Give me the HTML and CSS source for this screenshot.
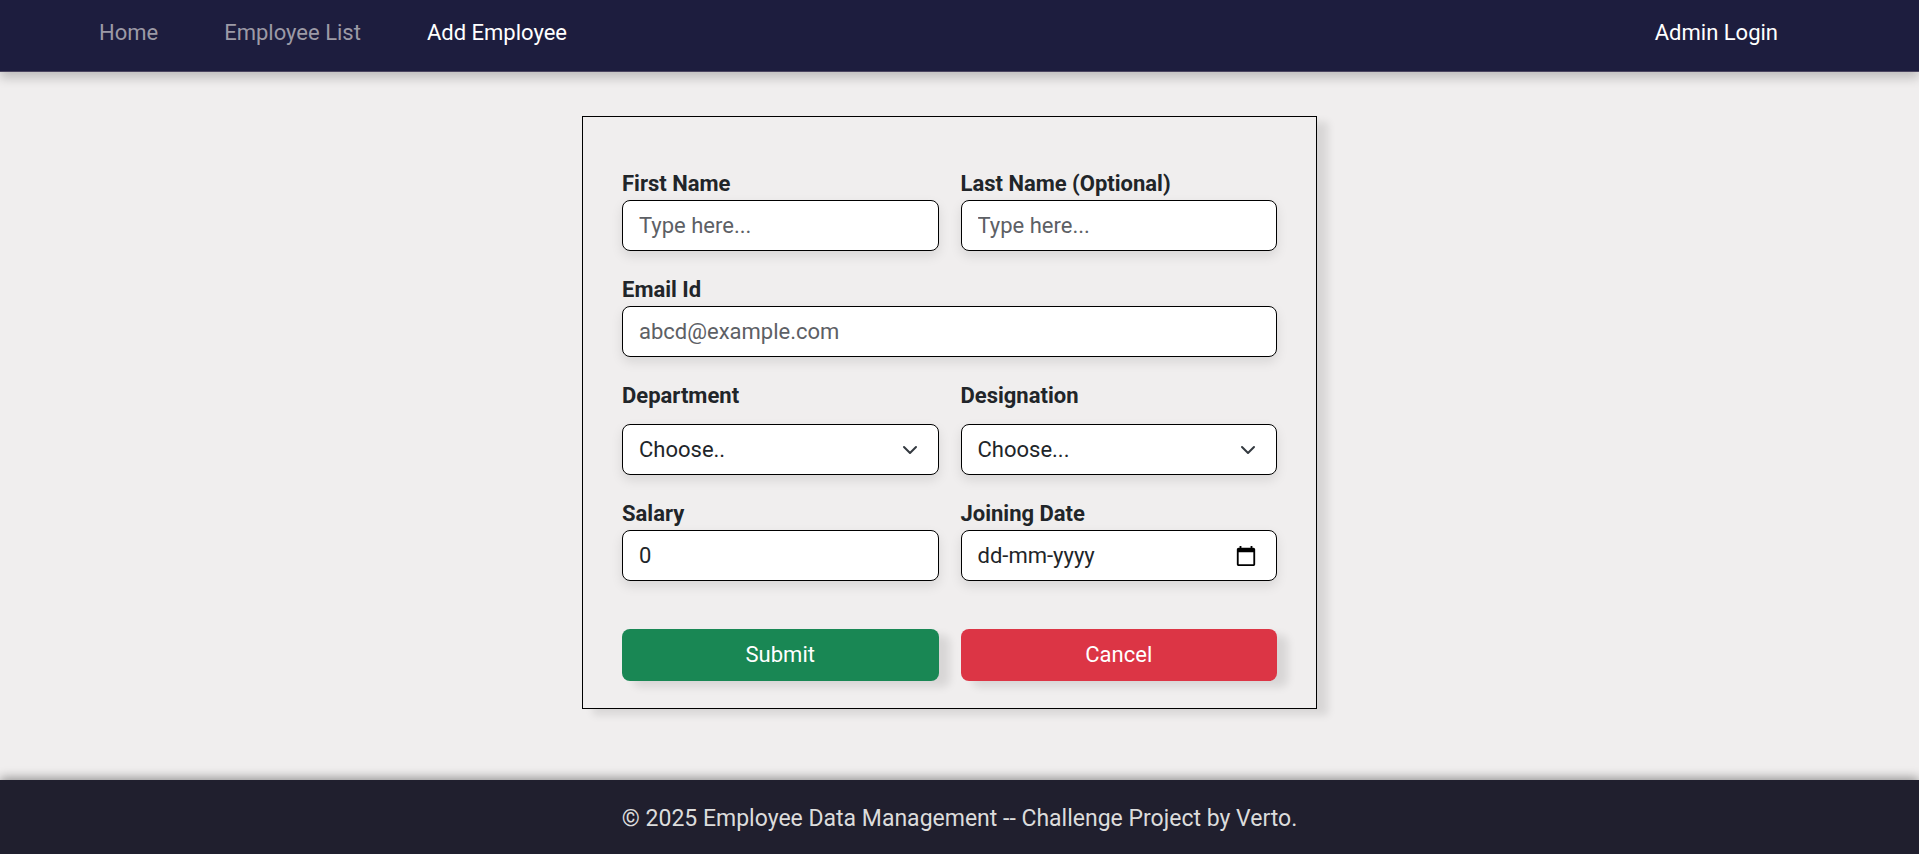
FILE: index.html
```html
<!DOCTYPE html>
<html lang="en">
<head>
  <meta charset="utf-8">
  <meta name="viewport" content="width=device-width, initial-scale=1">
  <title>Add Employee</title>
  <link rel="stylesheet" href="styles.css">
</head>
<body>
  <header class="topbar">
    <nav class="nav">
      <a class="nav-link" href="#home">Home</a>
      <a class="nav-link" href="#employees">Employee List</a>
      <a class="nav-link active" href="#add">Add Employee</a>
    </nav>
    <a class="nav-link active" href="#login">Admin Login</a>
  </header>

  <main class="main">
    <form class="card">
      <div class="field">
        <label class="label" for="first">First Name</label>
        <input class="control" id="first" type="text" placeholder="Type here...">
      </div>
      <div class="field">
        <label class="label" for="last">Last Name (Optional)</label>
        <input class="control" id="last" type="text" placeholder="Type here...">
      </div>
      <div class="field wide">
        <label class="label" for="email">Email Id</label>
        <input class="control" id="email" type="email" placeholder="abcd@example.com">
      </div>
      <div class="field">
        <label class="label spaced" for="department">Department</label>
        <div class="control-wrap">
          <select class="control" id="department"><option>Choose..</option></select>
          <svg class="chevron" viewBox="0 0 16 16" aria-hidden="true"><path d="m2 5 6 6 6-6"/></svg>
        </div>
      </div>
      <div class="field">
        <label class="label spaced" for="designation">Designation</label>
        <div class="control-wrap">
          <select class="control" id="designation"><option>Choose...</option></select>
          <svg class="chevron" viewBox="0 0 16 16" aria-hidden="true"><path d="m2 5 6 6 6-6"/></svg>
        </div>
      </div>
      <div class="field">
        <label class="label" for="salary">Salary</label>
        <input class="control" id="salary" type="number" value="0">
      </div>
      <div class="field">
        <label class="label" for="joined">Joining Date</label>
        <div class="control-wrap">
          <input class="control date" id="joined" type="text" placeholder="dd-mm-yyyy">
          <button class="calendar" type="button" aria-label="Open calendar">
            <svg viewBox="0 0 24 24" aria-hidden="true"><path d="M20 3h-1V1h-2v2H7V1H5v2H4c-1.1 0-2 .9-2 2v16c0 1.1.9 2 2 2h16c1.1 0 2-.9 2-2V5c0-1.1-.9-2-2-2zm0 18H4V8h16v13z"/></svg>
          </button>
        </div>
      </div>
      <div class="actions">
        <button class="btn submit" type="submit">Submit</button>
        <button class="btn cancel" type="button">Cancel</button>
      </div>
    </form>
  </main>

  <footer class="footer">© 2025 Employee Data Management -- Challenge Project by Verto.</footer>
</body>
</html>
```
FILE: styles.css
```css
* {
  box-sizing: border-box;
}

body {
  display: flex;
  flex-direction: column;
  min-height: 100vh;
  margin: 0;
  background: #f0eeee;
  color: #212529;
  font-family: Roboto, "Liberation Sans", sans-serif;
  font-size: 22px;
  line-height: 33px;
}

.topbar {
  display: flex;
  justify-content: space-between;
  padding: 16px 141px 22px 99px;
  background: #1d1d3e;
  border-bottom: 1px solid #4b4560;
  box-shadow: 0 6px 10px rgba(0, 0, 0, 0.2);
}

.nav {
  display: flex;
  gap: 66px;
}

.nav-link {
  color: #9c9aa6;
  text-decoration: none;
}

.nav-link.active {
  color: #fff;
}

.main {
  display: flex;
  flex: 1;
  justify-content: center;
  align-items: flex-start;
  padding: 44px 20px 48px 0;
}

.card {
  display: grid;
  grid-template-columns: 1fr 1fr;
  gap: 22px;
  width: 100%;
  max-width: 735px;
  padding: 50px 39px 27px;
  border: 1px solid #000;
  box-shadow: 11px 6px 8px rgba(0, 0, 0, 0.1);
}

.field {
  min-width: 0;
}

.wide,
.actions {
  grid-column: 1 / -1;
}

.label {
  display: block;
  font-weight: 700;
}

.spaced {
  margin-bottom: 12px;
}

.control-wrap {
  position: relative;
}

.control {
  display: block;
  width: 100%;
  height: 51px;
  margin: 0;
  padding: 8px 16px;
  border: 1px solid #000;
  border-radius: 8px;
  background: #fff;
  color: #212529;
  font: inherit;
  appearance: none;
  box-shadow: 0 5px 12px rgba(0, 0, 0, 0.1);
}

.control::placeholder {
  color: #5d6065;
  opacity: 1;
}

.control.date::placeholder {
  color: #212529;
}

.chevron {
  position: absolute;
  top: 18px;
  right: 21px;
  width: 16px;
  height: 16px;
  fill: none;
  stroke: #343a40;
  stroke-width: 2;
  stroke-linecap: round;
  stroke-linejoin: round;
  pointer-events: none;
}

.calendar {
  position: absolute;
  top: 15px;
  right: 20px;
  width: 22px;
  height: 22px;
  padding: 0;
  border: 0;
  background: none;
}

.calendar svg {
  display: block;
}

.actions {
  display: grid;
  grid-template-columns: 1fr 1fr;
  gap: 22px;
  margin-top: 26px;
}

.btn {
  height: 52px;
  padding: 0 16px 2px;
  border: 0;
  border-radius: 8px;
  color: #fff;
  font: inherit;
  box-shadow: 11px 6px 8px rgba(0, 0, 0, 0.1);
}

.submit {
  background: #198754;
}

.cancel {
  background: #dc3545;
}

.footer {
  padding: 22px 16px 19px;
  background: #201f2e;
  color: #dcdcdc;
  font-size: 23px;
  text-align: center;
  box-shadow: 0 -2px 10px rgba(0, 0, 0, 0.4);
}
```
